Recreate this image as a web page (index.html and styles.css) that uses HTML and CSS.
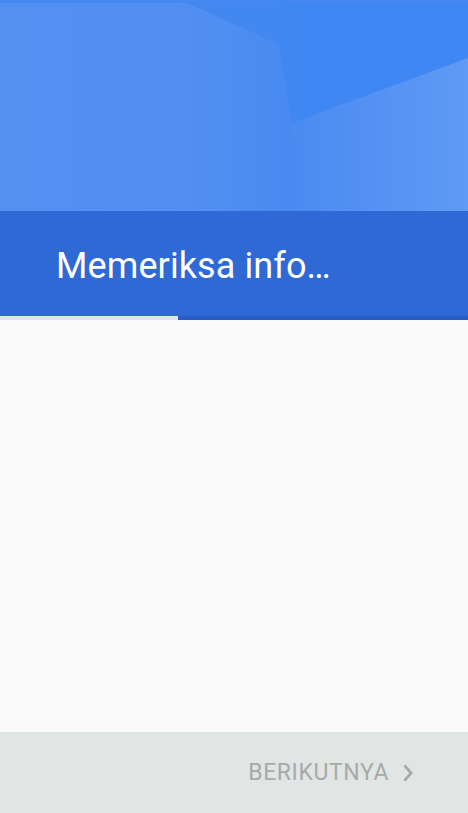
FILE: index.html
```html
<!DOCTYPE html>
<html lang="id">
  <head>
    <meta charset="UTF-8" />
    <meta name="viewport" content="width=device-width, initial-scale=1.0" />
    <title>Memeriksa info</title>
    <link rel="stylesheet" href="styles.css">
  </head>
  <body>
    <div class="setup">
      <div class="hero">
        <svg class="hero-art" viewBox="0 0 468 211" preserveAspectRatio="none">
          <defs>
            <linearGradient id="base" x1="0" y1="0" x2="1" y2="0">
              <stop offset="0" stop-color="#5391f1" />
              <stop offset="0.45" stop-color="#508ff1" />
              <stop offset="0.65" stop-color="#4789f1" />
              <stop offset="1" stop-color="#4a8af1" />
            </linearGradient>
            <linearGradient id="light" x1="0" y1="0" x2="1" y2="0">
              <stop offset="0" stop-color="#4a8bf1" />
              <stop offset="1" stop-color="#5f9af5" />
            </linearGradient>
            <linearGradient id="dark" x1="0" y1="0" x2="1" y2="0">
              <stop offset="0.3" stop-color="#4388f1" />
              <stop offset="0.45" stop-color="#3f87f2" />
            </linearGradient>
          </defs>
          <rect width="468" height="211" fill="url(#base)" />
          <polygon points="180,0 468,0 468,58 292,123 278,44" fill="url(#dark)" />
          <polygon points="292,123 468,58 468,211 296,211" fill="url(#light)" />
          <rect width="468" height="3" fill="#4688f1" />
        </svg>
      </div>

      <div class="title-bar">
        <h1 class="title">Memeriksa info…</h1>
      </div>

      <!-- indeterminate progress, frozen -->
      <div class="progress">
        <div class="progress-fill" style="margin-left: 178px"></div>
      </div>

      <div class="content"></div>

      <div class="footer">
        <button class="next" disabled>
          BERIKUTNYA
          <svg class="chevron" viewBox="0 0 10 18">
            <path d="M1.4 1.4 L8.2 9 L1.4 16.6" fill="none" stroke="currentColor" stroke-width="2.8" />
          </svg>
        </button>
      </div>
    </div>
  </body>
</html>
```

FILE: styles.css
```css
html,
body {
  margin: 0;
  height: 100%;
}
body {
  background-color: #fafafa;
  font-family: Roboto, "Noto Sans", sans-serif;
}
.setup {
  display: flex;
  flex-direction: column;
  height: 100vh;
}
.hero {
  height: 211px;
  flex-shrink: 0;
}
.hero-art {
  display: block;
  width: 100%;
  height: 100%;
}
.title-bar {
  height: 105px;
  flex-shrink: 0;
  background-color: #2f69d5;
  display: flex;
  align-items: center;
  padding-left: 56px;
}
.title {
  margin: 0;
  padding-top: 4px;
  color: #ffffff;
  font-size: 36px;
  font-weight: 400;
  letter-spacing: 0.1px;
}
.progress {
  height: 4px;
  flex-shrink: 0;
  display: flex;
  background-color: #dfe3ee;
}
.progress-fill {
  flex: 1;
  background-color: #2a5cc7;
}
.content {
  flex: 1;
  background-color: #fafafa;
}
.footer {
  height: 81px;
  flex-shrink: 0;
  background-color: #e1e5e4;
  display: flex;
  justify-content: flex-end;
  align-items: center;
  padding-right: 55px;
}
.next {
  display: flex;
  align-items: center;
  gap: 14px;
  border: 0;
  background: none;
  padding: 0;
  color: #a7aaaa;
  font-family: Roboto, "Noto Sans", sans-serif;
  font-size: 23px;
  font-weight: 400;
  letter-spacing: 0.6px;
}
.chevron {
  width: 10px;
  height: 18px;
}
```
